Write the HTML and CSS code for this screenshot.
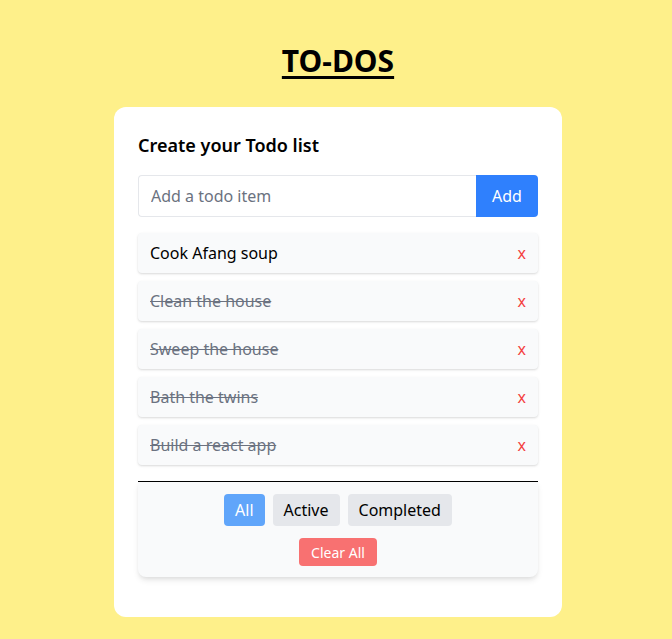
FILE: index.html
```html
<!DOCTYPE html>
<html>
<head>
<meta charset="utf-8">
<link rel="stylesheet" href="styles.css">
</head>
<body>
<main class="page">
  <h1 class="title">TO-DOS</h1>
  <section class="card">
    <h2 class="card-title">Create your Todo list</h2>
    <form class="add-row">
      <input class="add-input" type="text" placeholder="Add a todo item">
      <button class="add-btn" type="button">Add</button>
    </form>
    <ul class="list">
      <li class="item"><span class="item-text">Cook Afang soup</span><span class="del">x</span></li>
      <li class="item done"><span class="item-text">Clean the house</span><span class="del">x</span></li>
      <li class="item done"><span class="item-text">Sweep the house</span><span class="del">x</span></li>
      <li class="item done"><span class="item-text">Bath the twins</span><span class="del">x</span></li>
      <li class="item done"><span class="item-text">Build a react app</span><span class="del">x</span></li>
    </ul>
    <div class="footer">
      <div class="filters">
        <button class="filter active" type="button">All</button>
        <button class="filter" type="button">Active</button>
        <button class="filter" type="button">Completed</button>
      </div>
      <button class="clear" type="button">Clear All</button>
    </div>
  </section>
</main>
</body>
</html>
```

FILE: styles.css
```css
* { box-sizing: border-box; }
html, body { margin: 0; padding: 0; }
body {
  background: #fef08a;
  font-family: "Noto Sans", "Open Sans", sans-serif;
  color: #000;
}
.page {
  display: flex;
  flex-direction: column;
  align-items: center;
  padding: 39px 0 0 4px;
}
.title {
  margin: 0 0 24px;
  font-size: 30px;
  line-height: 44px;
  font-weight: 700;
  text-decoration: underline;
  text-decoration-thickness: 3px;
  text-underline-offset: 4px;
}
.card {
  width: 448px;
  background: #fff;
  border-radius: 12px;
  padding: 24px 24px 40px;
}
.card-title {
  margin: 0 0 16px;
  font-size: 18px;
  line-height: 28px;
  font-weight: 600;
}
.add-row {
  display: flex;
  margin: 0 0 16px;
}
.add-input {
  flex: 1;
  height: 42px;
  border: 1px solid #e5e7eb;
  border-right: none;
  border-radius: 4px 0 0 4px;
  padding: 0 12px;
  font: inherit;
  font-size: 16px;
  outline: none;
}
.add-input::placeholder { color: #6b7280; }
.add-btn {
  width: 62px;
  height: 42px;
  border: none;
  border-radius: 0 4px 4px 0;
  background: #2f80fd;
  color: #fff;
  font: inherit;
  font-size: 16px;
}
.list {
  list-style: none;
  margin: 0;
  padding: 0;
  display: flex;
  flex-direction: column;
  gap: 8px;
}
.item {
  display: flex;
  align-items: center;
  justify-content: space-between;
  height: 40px;
  padding: 0 12px;
  background: #f9fafb;
  border-radius: 4px;
  box-shadow: 0 1px 3px rgba(0,0,0,0.1), 0 1px 2px rgba(0,0,0,0.06);
  font-size: 16px;
}
.item.done .item-text {
  text-decoration: line-through;
  color: #6b7280;
}
.del { color: #f43f3f; }
.footer {
  margin-top: 16px;
  border-top: 1px solid #000;
  background: #f9fafb;
  border-radius: 0 0 8px 8px;
  box-shadow: 0 4px 6px -1px rgba(0,0,0,0.1), 0 2px 4px -1px rgba(0,0,0,0.06);
  padding: 12px 0 11px;
  display: flex;
  flex-direction: column;
  align-items: center;
  gap: 12px;
}
.filters { display: flex; gap: 8px; }
.filter {
  height: 32px;
  padding: 0 11px;
  border: none;
  border-radius: 4px;
  background: #e5e7eb;
  color: #000;
  font: inherit;
  font-size: 16px;
}
.filter.active { background: #60a5fa; color: #fff; }
.clear {
  height: 28px;
  padding: 0 12px;
  border: none;
  border-radius: 4px;
  background: #f87171;
  color: #fff;
  font: inherit;
  font-size: 14px;
}
```
